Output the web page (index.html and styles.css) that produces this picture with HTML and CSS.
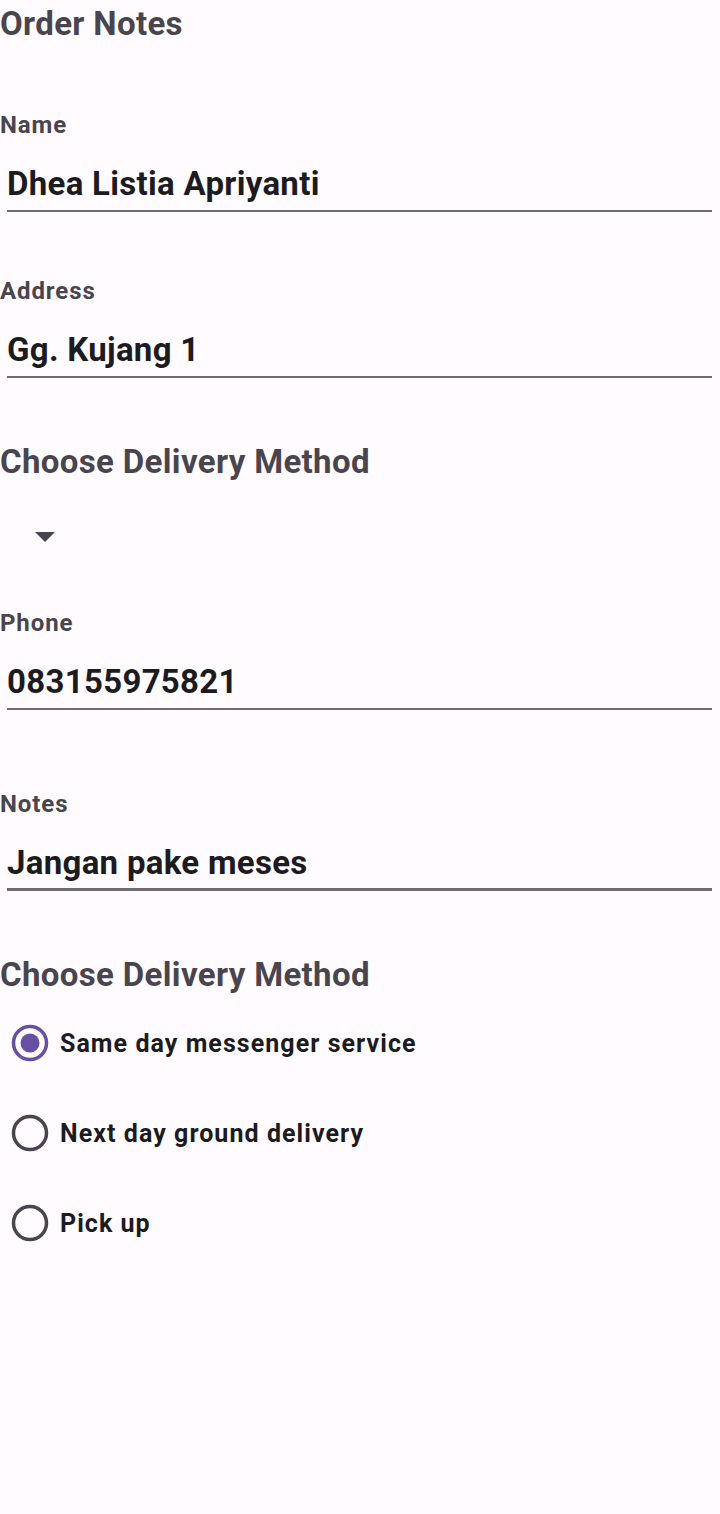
FILE: index.html
```html
<!DOCTYPE html>
<html>
<head>
<meta charset="utf-8">
<link rel="stylesheet" href="styles.css">
</head>
<body>
<main class="page">
  <h1 class="title">Order Notes</h1>

  <div class="field field-first">
    <div class="label">Name</div>
    <div class="input">Dhea Listia Apriyanti</div>
  </div>

  <div class="field">
    <div class="label">Address</div>
    <div class="input">Gg. Kujang 1</div>
  </div>

  <h2 class="title section">Choose Delivery Method</h2>
  <div class="spinner">
    <svg class="caret" width="20" height="12" viewBox="0 0 20 12"><path d="M0 1 L20 1 L10 11 Z" fill="#49454F"/></svg>
  </div>

  <div class="field field-phone">
    <div class="label">Phone</div>
    <div class="input">083155975821</div>
  </div>

  <div class="field field-notes">
    <div class="label">Notes</div>
    <div class="input focused">Jangan pake meses</div>
  </div>

  <h2 class="title section section-2">Choose Delivery Method</h2>
  <div class="radios">
    <div class="radio">
      <svg class="radio-icon" width="40" height="40" viewBox="0 0 40 40"><circle cx="20" cy="20" r="16.5" fill="none" stroke="#6750A4" stroke-width="3.5"/><circle cx="20" cy="20" r="9.5" fill="#6750A4"/></svg>
      <span class="radio-text">Same day messenger service</span>
    </div>
    <div class="radio">
      <svg class="radio-icon" width="40" height="40" viewBox="0 0 40 40"><circle cx="20" cy="20" r="16.5" fill="none" stroke="#49454F" stroke-width="3.5"/></svg>
      <span class="radio-text">Next day ground delivery</span>
    </div>
    <div class="radio">
      <svg class="radio-icon" width="40" height="40" viewBox="0 0 40 40"><circle cx="20" cy="20" r="16.5" fill="none" stroke="#49454F" stroke-width="3.5"/></svg>
      <span class="radio-text">Pick up</span>
    </div>
  </div>
</main>
</body>
</html>
```

FILE: styles.css
```css
html, body {
  margin: 0;
  padding: 0;
  background: #FFFBFE;
}
body {
  font-family: Roboto, "Liberation Sans", sans-serif;
  width: 720px;
  min-height: 1514px;
}
.page {
  display: flex;
  flex-direction: column;
}
.title {
  margin: 0;
  font-size: 33px;
  line-height: 48px;
  font-weight: 700;
  color: #49454F;
  letter-spacing: 0.35px;
}
.section {
  margin-top: 60px;
}
.section-2 {
  margin-top: 60px;
}
.field {
  display: flex;
  flex-direction: column;
  margin-top: 64px;
}
.field-first {
  margin-top: 62px;
}
.field-phone {
  margin-top: 0;
}
.field-notes {
  margin-top: 79px;
}
.label {
  font-size: 24px;
  line-height: 30px;
  font-weight: 700;
  color: #49454F;
  letter-spacing: 0.9px;
}
.input {
  margin: 24px 8px 0 7px;
  font-size: 33px;
  line-height: 40px;
  font-weight: 700;
  color: #1C1B1F;
  letter-spacing: 0.3px;
  padding: 0 0 6px 0;
  border-bottom: 2px solid #6F6B73;
}
.input.focused {
  border-bottom-width: 3px;
  padding-bottom: 5px;
}
.spinner {
  height: 122px;
  display: flex;
  align-items: flex-start;
  padding-left: 35px;
}
.caret {
  margin-top: 45px;
}
.radios {
  display: flex;
  flex-direction: column;
  margin-top: 24px;
  gap: 50px;
}
.radio {
  display: flex;
  align-items: center;
  height: 40px;
}
.radio-icon {
  margin-left: 10px;
  margin-right: 10px;
}
.radio-text {
  font-size: 25px;
  font-weight: 700;
  color: #1C1B1F;
  letter-spacing: 1.05px;
}
```
